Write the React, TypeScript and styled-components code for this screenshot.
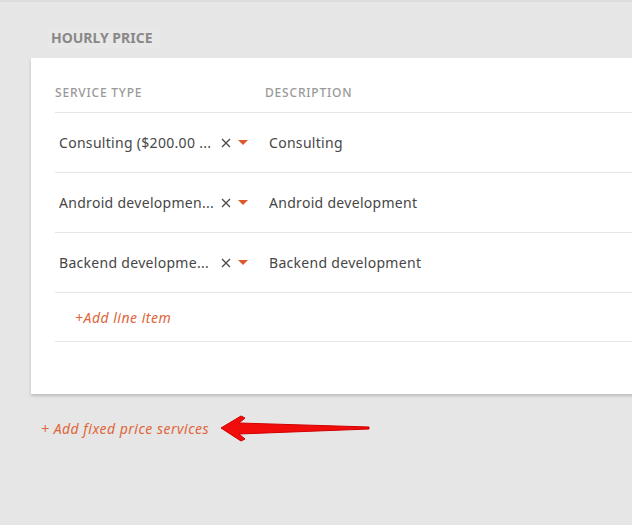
import React from "react";
import styled, { createGlobalStyle } from "styled-components";

const Global = createGlobalStyle`
  html, body { margin: 0; padding: 0; background: #e6e6e6; }
  body { font-family: "Noto Sans", Roboto, sans-serif; }
`;

const Page = styled.div`
  min-height: 525px;
  border-top: 2px solid #dcdcdc;
  box-sizing: border-box;
  padding: 0 0 0 31px;
  overflow: hidden;
`;

const SectionTitle = styled.div`
  margin: 26px 0 0 17px;
  padding: 0 3px;
  display: inline-block;
  font-size: 14px;
  font-weight: 700;
  color: #888;
  letter-spacing: 0;
  line-height: 20px;
  background: #e8e8e8;
  width: 106px;
`;

const Card = styled.div`
  margin-top: 10px;
  background: #fff;
  padding: 0 0 52px 24px;
  box-shadow: 0 2px 3px rgba(0, 0, 0, 0.18);
  width: 620px;
`;

const HeaderRow = styled.div`
  display: grid;
  grid-template-columns: 210px 1fr;
  height: 55px;
  align-items: end;
  padding-bottom: 11px;
  box-sizing: border-box;
  border-bottom: 1px solid #e6e6e6;
`;

const HeaderCell = styled.div`
  font-size: 12px;
  font-weight: 500;
  color: #999;
  letter-spacing: 0.8px;
  line-height: 16px;
`;

const Row = styled.div`
  display: grid;
  grid-template-columns: 210px 1fr;
  height: 60px;
  align-items: center;
  border-bottom: 1px solid #e6e6e6;
  box-sizing: border-box;
`;

const ServiceCell = styled.div`
  display: flex;
  align-items: center;
  padding-left: 4px;
`;

const ServiceText = styled.span`
  width: 160px;
  font-size: 14px;
  color: #464646;
  letter-spacing: 0.3px;
  white-space: nowrap;
  overflow: hidden;
`;

const Clear = styled.span`
  width: 14px;
  display: flex;
  justify-content: center;
  margin-right: 5px;
`;

const Caret = styled.span`
  width: 0;
  height: 0;
  border-left: 5px solid transparent;
  border-right: 5px solid transparent;
  border-top: 5px solid #dd5a2c;
`;

const DescCell = styled.div`
  padding-left: 4px;
  font-size: 14px;
  color: #464646;
  letter-spacing: 0.3px;
  white-space: nowrap;
`;

const AddRow = styled.div`
  height: 49px;
  display: flex;
  align-items: center;
  padding-left: 20px;
  border-bottom: 1px solid #e6e6e6;
  box-sizing: border-box;
`;

const OrangeLink = styled.span`
  font-size: 14px;
  font-style: italic;
  color: #e0653a;
  letter-spacing: 0.5px;
  white-space: nowrap;
`;

const FooterRow = styled.div`
  display: flex;
  align-items: center;
  margin: 24px 0 0 10px;
  height: 20px;
  gap: 10px;
`;

const rows = [
  { service: "Consulting ($200.00 ...", desc: "Consulting" },
  { service: "Android developmen...", desc: "Android development" },
  { service: "Backend developme...", desc: "Backend development" },
];

const XIcon = () => (
  <svg width="10" height="10" viewBox="0 0 10 10">
    <path d="M1 1 L9 9 M9 1 L1 9" stroke="#4a4a4a" strokeWidth="1.3" />
  </svg>
);

const Arrow = () => (
  <svg width="152" height="30" viewBox="0 0 152 30">
    <path
      d="M2 15 L22 3 L26 5 L20 10 L150 14 L150 16 L20 21 L26 26 L22 28 Z"
      fill="#f20d0d"
      stroke="#d00000"
      strokeWidth="1"
      strokeLinejoin="round"
    />
  </svg>
);

export default function App() {
  return (
    <>
      <Global />
      <Page>
        <SectionTitle>HOURLY PRICE</SectionTitle>
        <Card>
          <HeaderRow>
            <HeaderCell>SERVICE TYPE</HeaderCell>
            <HeaderCell>DESCRIPTION</HeaderCell>
          </HeaderRow>
          {rows.map((r) => (
            <Row key={r.desc}>
              <ServiceCell>
                <ServiceText>{r.service}</ServiceText>
                <Clear>
                  <XIcon />
                </Clear>
                <Caret />
              </ServiceCell>
              <DescCell>{r.desc}</DescCell>
            </Row>
          ))}
          <AddRow>
            <OrangeLink>+Add line item</OrangeLink>
          </AddRow>
        </Card>
        <FooterRow>
          <OrangeLink>+ Add fixed price services</OrangeLink>
          <Arrow />
        </FooterRow>
      </Page>
    </>
  );
}
